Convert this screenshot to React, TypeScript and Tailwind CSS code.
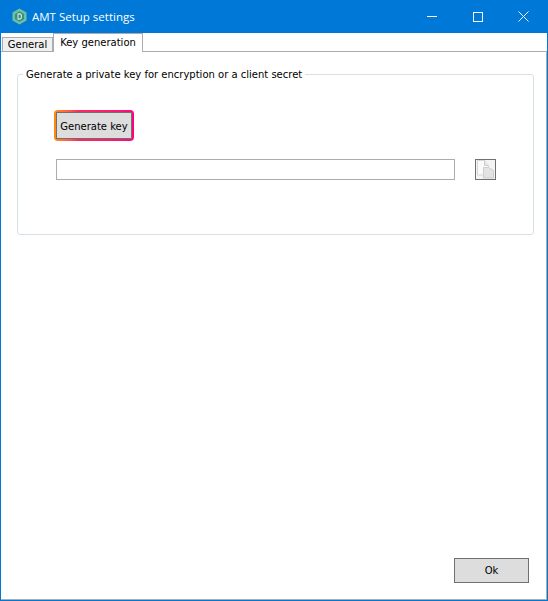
import { useState } from 'react'

const UI_FONT = "font-['DejaVu_Sans',sans-serif]"

function AppIcon() {
  return (
    <svg width="15" height="17" viewBox="0 0 16 18" className="shrink-0">
      <polygon points="8,0.5 15.5,4.8 15.5,13.2 8,17.500 0.5,13.2 0.5,4.8" fill="#6cc0a4" />
      <polygon points="8,3.500 12.8,6.2 12.8,11.8 8,14.5 3.2,11.8 3.2,6.2" fill="#3c8f80" />
      <path d="M6.4 6.2h1.600c1.500 0 2.200 1.100 2.200 2.800s-.7 2.800-2.200 2.800H6.400z" fill="none" stroke="#cfe9df" strokeWidth="1.1" />
    </svg>
  )
}

function CopyIcon() {
  return (
    <svg width="19" height="19" viewBox="0 0 19 19">
      <path d="M1.500 0.500h7l4 5v9.500h-11z" fill="#fafafa" stroke="#d8d8d8" />
      <path d="M8.500 0.500v5h4" fill="#e8e8e8" stroke="#cccccc" />
      <path d="M7.500 7.500h5l5 3v7.500h-10z" fill="#e3e3e3" stroke="#cdcdcd" />
    </svg>
  )
}

export default function App() {
  const [tab, setTab] = useState<'general' | 'key'>('key')

  return (
    <div className={`w-[548px] h-[601px] flex flex-col bg-[#0078d7] pl-px pr-px pb-px text-[10px] text-black ${UI_FONT}`}>
      {/* title bar */}
      <div className="h-[33px] -ml-px flex items-center bg-[#0078d7] text-white shrink-0">
        <div className="pl-[12px] pr-[5px] flex items-center"><AppIcon /></div>
        <span className="text-[11.5px] font-['Open_Sans',sans-serif]">AMT Setup settings</span>
        <div className="ml-auto flex items-center">
          <div className="w-[46px] h-[33px] flex items-center justify-center">
            <div className="w-[10px] h-px bg-white" />
          </div>
          <div className="w-[46px] h-[33px] flex items-center justify-center">
            <div className="w-[10px] h-[10px] border border-white" />
          </div>
          <div className="w-[46px] h-[33px] flex items-center justify-center pr-[2px]">
            <svg width="11" height="11" viewBox="0 0 11 11" stroke="white" strokeWidth="1">
              <path d="M0.5 0.5l10 10M10.5 0.5l-10 10" />
            </svg>
          </div>
        </div>
      </div>

      <div className="flex-1 flex flex-col bg-white min-h-0">
        {/* tabs */}
        <div className="h-[19px] flex items-end pl-px border-b border-[#acacac] shrink-0">
          <button
            onClick={() => setTab('general')}
            className="w-[51px] h-[15px] -mb-px bg-[#f0f0f0] border border-[#acacac] flex items-center justify-center leading-none"
          >
            General
          </button>
          <button
            onClick={() => setTab('key')}
            className="w-[90px] h-[19px] -mb-px bg-white border border-b-0 border-[#acacac] flex items-center justify-center leading-none pb-px"
          >
            Key generation
          </button>
        </div>

        {/* page */}
        <div className="flex-1 flex flex-col pl-[16px] pr-[12px] pt-[16px] pb-[16px] min-h-0 border-r border-b border-[#acacac]">
          {tab === 'key' && (
            <fieldset className="h-[167px] border border-[#d5dfe5] rounded-[3px] min-w-0">
              <legend className="ml-[5px] px-[3px] leading-[13px]">
                Generate a private key for encryption or a client secret
              </legend>
              <div className="pl-[36px]">
                <div className="mt-[29px] w-[80px] h-[31px] p-[2px] rounded-[4px] bg-gradient-to-r from-[#ff8c00] via-[#ff2a5a] via-30% to-[#ff0080]">
                  <button className="w-full h-full bg-[#dddddd] border border-[#707070] leading-none pt-[2px]">
                    Generate key
                  </button>
                </div>
                <div className="mt-[18px] ml-[2px] flex gap-[20px]">
                  <input className="w-[399px] h-[21px] border border-[#acacac] bg-white outline-none" />
                  <button className="w-[21px] h-[21px] border border-[#707070] bg-[#f4f4f4] flex items-center justify-center">
                    <CopyIcon />
                  </button>
                </div>
              </div>
            </fieldset>
          )}
          <div className="mt-auto flex justify-end pr-[5px]">
            <button className="w-[75px] h-[25px] bg-[#dddddd] border border-[#707070] leading-none">
              Ok
            </button>
          </div>
        </div>
      </div>
    </div>
  )
}
